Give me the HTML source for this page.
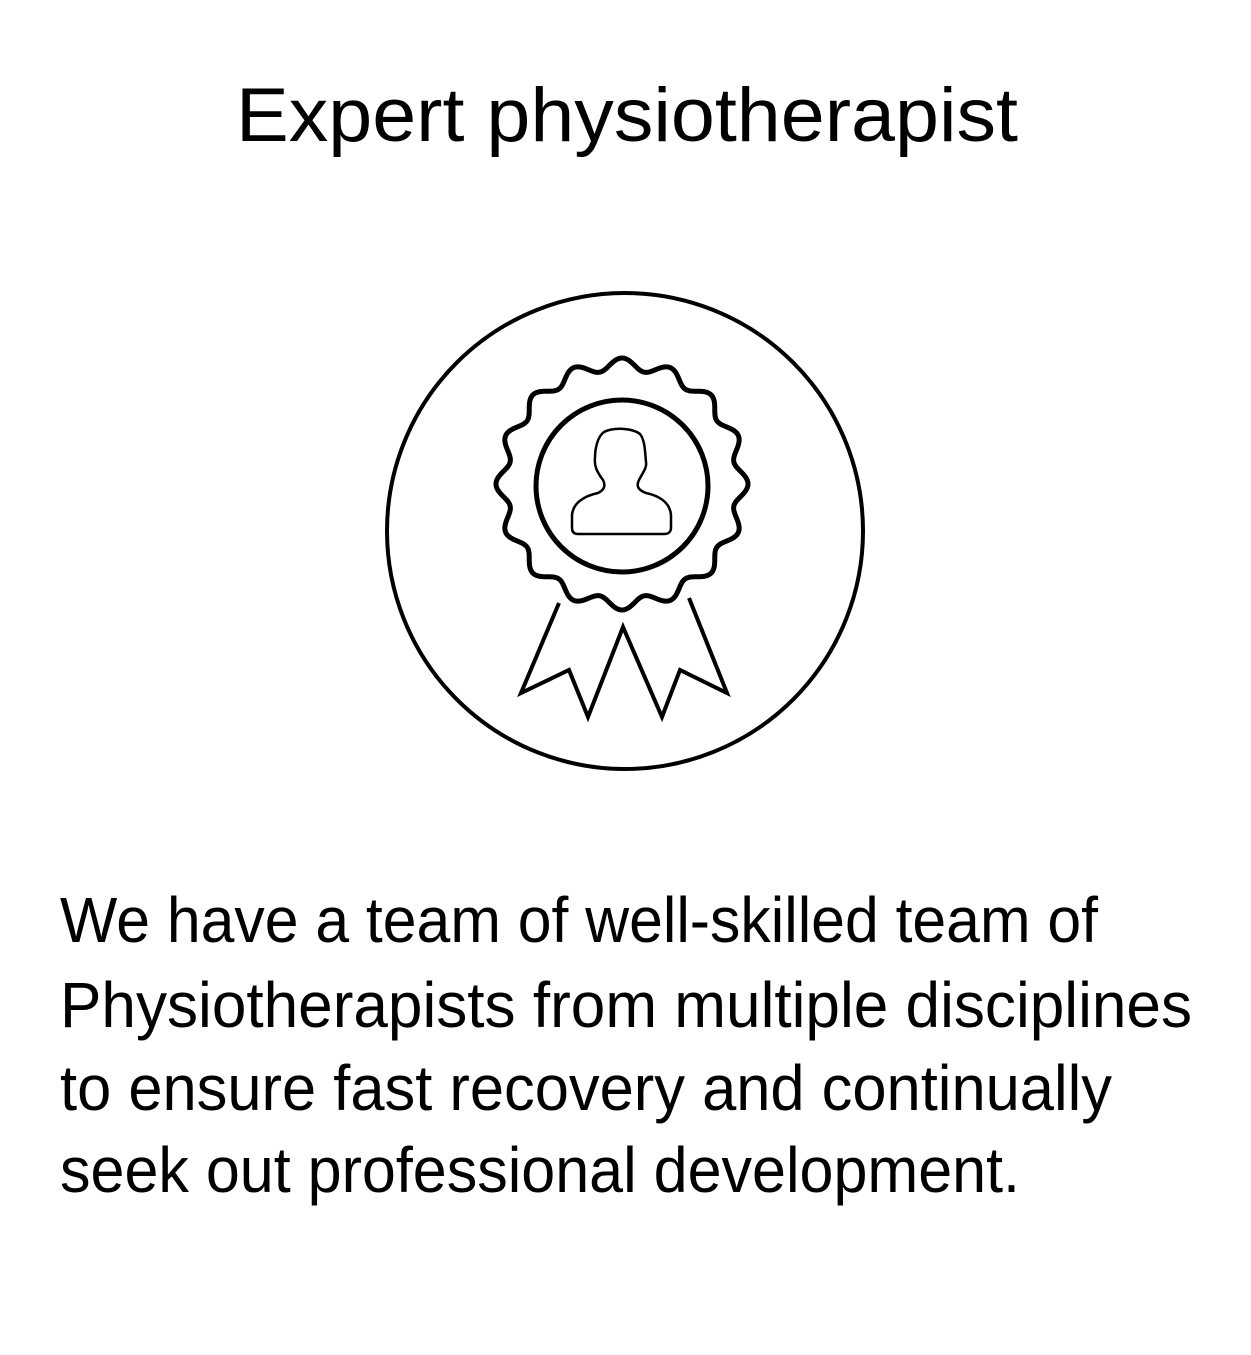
<!DOCTYPE html>
<html><head><meta charset="utf-8"><style>
html,body{margin:0;padding:0;background:#fff;width:1251px;height:1355px;overflow:hidden}
svg{display:block}
text{font-family:"Liberation Sans",sans-serif;fill:#000}
</style></head><body>
<svg width="1251" height="1355" viewBox="0 0 1251 1355">
<text x="236" y="141" font-size="76" textLength="782" lengthAdjust="spacingAndGlyphs">Expert physiotherapist</text>
<circle cx="625" cy="531" r="238" fill="none" stroke="#000" stroke-width="4"/>
<path id="wave" fill="none" stroke="#000" stroke-width="5" d=""/>
<circle cx="622" cy="486" r="86" fill="none" stroke="#000" stroke-width="5"/>
<path fill="none" stroke="#000" stroke-width="2.5" stroke-linejoin="round" d="M604 432 C614 427 632 428 640 434 C645 440 645 452 646 462 C647 468 643 472 639 480 C636 486 638 490 646 493 C660 496 670 503 671 515 L671 528 C671 532 668 534 664 534 L578 534 C574 534 572 532 572 528 L572 515 C573 503 584 496 598 493 C604 490 606 486 603 480 C597 472 594 466 595 458 C595 450 597 437 604 432 Z"/>
<polyline fill="none" stroke="#000" stroke-width="4" stroke-linejoin="miter" points="559,603 521,693 569,670 588,717 623,627 662,717 680,670 727,693 689,598"/>
<text x="60" y="942" font-size="64" textLength="1038" lengthAdjust="spacingAndGlyphs">We have a team of well-skilled team of</text>
<text x="60" y="1027" font-size="64" textLength="1132" lengthAdjust="spacingAndGlyphs">Physiotherapists from multiple disciplines</text>
<text x="60" y="1110" font-size="64" textLength="1052" lengthAdjust="spacingAndGlyphs">to ensure fast recovery and continually</text>
<text x="60" y="1192" font-size="64" textLength="960" lengthAdjust="spacingAndGlyphs">seek out professional development.</text>
</svg>
<script>
var cx=622,cy=484,d="";
for(var i=0;i<=720;i++){var t=i/720*2*Math.PI;var r=120+6*Math.cos(16*t);var x=cx+r*Math.sin(t),y=cy-r*Math.cos(t);d+=(i?"L":"M")+x.toFixed(2)+" "+y.toFixed(2);}
document.getElementById("wave").setAttribute("d",d+"Z");
</script>
</body></html>
